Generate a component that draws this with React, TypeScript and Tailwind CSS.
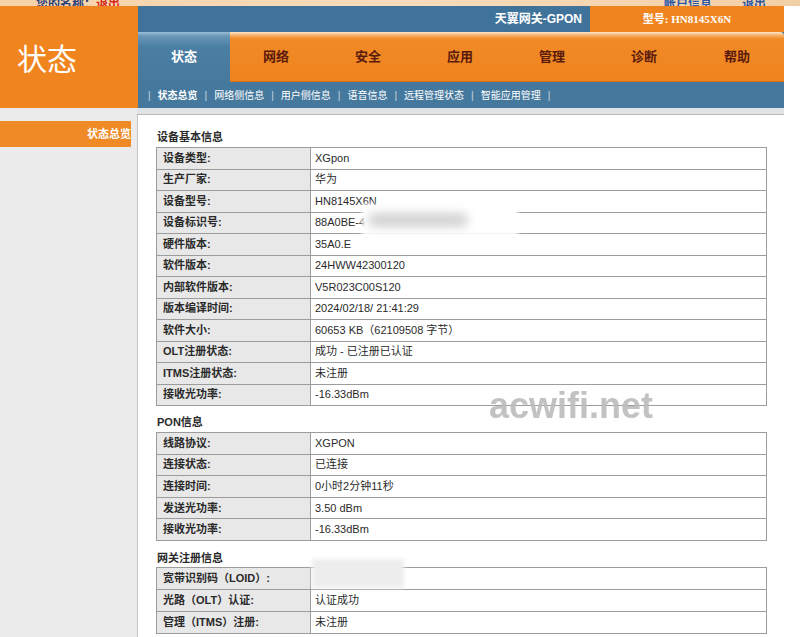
import React from "react";

const tabs = ["状态", "网络", "安全", "应用", "管理", "诊断", "帮助"];
const subs = ["状态总览", "网络侧信息", "用户侧信息", "语音信息", "远程管理状态", "智能应用管理"];

const t1: [string, string][] = [
  ["设备类型:", "XGpon"],
  ["生产厂家:", "华为"],
  ["设备型号:", "HN8145X6N"],
  ["设备标识号:", "88A0BE-4"],
  ["硬件版本:", "35A0.E"],
  ["软件版本:", "24HWW42300120"],
  ["内部软件版本:", "V5R023C00S120"],
  ["版本编译时间:", "2024/02/18/ 21:41:29"],
  ["软件大小:", "60653 KB（62109508 字节）"],
  ["OLT注册状态:", "成功 - 已注册已认证"],
  ["ITMS注册状态:", "未注册"],
  ["接收光功率:", "-16.33dBm"],
];
const t2: [string, string][] = [
  ["线路协议:", "XGPON"],
  ["连接状态:", "已连接"],
  ["连接时间:", "0小时2分钟11秒"],
  ["发送光功率:", "3.50 dBm"],
  ["接收光功率:", "-16.33dBm"],
];
const t3: [string, string][] = [
  ["宽带识别码（LOID）:", ""],
  ["光路（OLT）认证:", "认证成功"],
  ["管理（ITMS）注册:", "未注册"],
];

function InfoTable({ rows, h }: { rows: [string, string][]; h: string }) {
  return (
    <table className="w-[611px] border-collapse border border-[#9c9c9c] text-[11px] text-[#2a2a2a]">
      <tbody>
        {rows.map(([k, v]) => (
          <tr key={k} className={h}>
            <td className="w-[154px] border border-[#9c9c9c] bg-[#e8e8e8] pl-[6px] font-bold leading-none">{k}</td>
            <td className="border border-[#9c9c9c] bg-white pl-[4px] leading-none">{v}</td>
          </tr>
        ))}
      </tbody>
    </table>
  );
}

export default function App() {
  return (
    <div
      className="relative w-[800px] h-[637px] overflow-hidden bg-white"
      style={{ fontFamily: '"Liberation Sans", "Noto Sans CJK SC", sans-serif' }}
    >
      {/* top strip */}
      <div className="flex h-[6px] items-end overflow-hidden bg-gradient-to-r from-[#f6d2a8] via-[#f9dcbc] to-[#f3cfa6]">
        <div className="flex w-[800px] items-end text-[12px] font-bold leading-[12px] -mb-[4px]">
          <span className="ml-[36px] text-[#2c3f7a]">您的名称：</span>
          <span className="text-[#d42a1c]">退出</span>
          <span className="ml-auto text-[#2c58a8]">帐户信息</span>
          <span className="ml-[30px] mr-[34px] text-[#2c58a8]">退出</span>
        </div>
      </div>

      {/* header */}
      <div className="flex h-[102px]">
        <div className="flex w-[138px] items-center bg-[#f0851f] pl-[17px]">
          <span className="text-[30px] font-normal leading-none text-white" style={{ fontFamily: '"Noto Sans CJK SC", sans-serif' }}>
            状态
          </span>
        </div>
        <div className="flex w-[646px] flex-col">
          <div className="flex h-[26px]">
            <div className="flex flex-1 items-center justify-end bg-[#3f7399] pr-[8px] text-[12px] font-bold text-white">
              天翼网关-GPON
            </div>
            <div
              className="flex w-[194px] items-center justify-center bg-[#f0851f] text-[11px] font-bold text-white"
              style={{ fontFamily: '"Liberation Serif", "Noto Sans CJK SC", serif' }}
            >
              型号: HN8145X6N
            </div>
          </div>
          <div className="flex h-[50px] bg-[#3f7399]">
            {tabs.map((t, i) => (
              <div
                key={t}
                className={
                  i === 0
                    ? "flex w-[92px] items-center justify-center bg-[linear-gradient(to_bottom,#9cbfd6_0%,#6a98b8_8%,#4a7ea3_30%,#45799e_100%)] text-[13px] font-bold text-white"
                    : i === 6
                    ? "flex w-[94px] items-center justify-center rounded-tr-[4px] border-b border-[#d9701a] bg-[linear-gradient(to_bottom,#fce6cc_0%,#f6b672_6%,#f08a26_14%,#ef841e_100%)] text-[13px] font-bold text-[#5a1a0c]"
                    : "flex w-[92px] items-center justify-center border-b border-[#d9701a] bg-[linear-gradient(to_bottom,#fce6cc_0%,#f6b672_6%,#f08a26_14%,#ef841e_100%)] text-[13px] font-bold text-[#5a1a0c]"
                }
              >
                {t}
              </div>
            ))}
          </div>
          <div className="flex h-[26px] items-center gap-[7px] bg-[#45789d] pl-[10px] text-[10px] text-white">
            <span className="text-[#c9d8e4]">|</span>
            {subs.map((s, i) => (
              <React.Fragment key={s}>
                <span className={i === 0 ? "font-bold" : ""}>{s}</span>
                <span className="text-[#c9d8e4]">|</span>
              </React.Fragment>
            ))}
          </div>
        </div>
      </div>

      {/* body */}
      <div className="flex h-[529px]">
        <div className="w-[137px] bg-[#ebebeb] pt-[13px]">
          <div className="flex h-[26px] w-[131px] items-center justify-end bg-[#ef8a27] text-[11px] font-bold text-white">
            状态总览
          </div>
        </div>
        <div className="flex w-[647px] flex-col">
          <div className="h-[7px] border-b border-[#b8b8b8] bg-[#e1e4e7]" />
          <div className="flex-1 border-l border-[#c4c4c4] bg-white pl-[18px] pt-[14px]">
            <div className="mb-[2px] pl-[1px] text-[11px] font-bold leading-[16px] text-[#2a2a2a]">设备基本信息</div>
            <InfoTable rows={t1} h="h-[21.5px]" />
            <div className="mb-[2px] mt-[8px] pl-[1px] text-[11px] font-bold leading-[16px] text-[#2a2a2a]">PON信息</div>
            <InfoTable rows={t2} h="h-[21.6px]" />
            <div className="mb-[1px] mt-[9px] pl-[1px] text-[11px] font-bold leading-[16px] text-[#2a2a2a]">网关注册信息</div>
            <InfoTable rows={t3} h="h-[22px]" />
          </div>
        </div>
        <div className="flex-1 bg-white" />
      </div>

      {/* watermark */}
      <div className="pointer-events-none absolute left-[489px] top-[388px] text-[36px] font-bold leading-none text-[#bcbcbc] opacity-90" style={{ fontFamily: '"Liberation Sans", sans-serif' }}>
        acwifi.net
      </div>

      {/* blurred regions */}
      <div className="absolute left-[362px] top-[204px] h-[32px] w-[156px] bg-white blur-[2px]">
        <div className="ml-[6px] mt-[9px] h-[14px] w-[100px] rounded-full bg-[#d2d2d2] blur-[4px]" />
      </div>
      <div className="absolute left-[312px] top-[559px] h-[29px] w-[92px] bg-[#ededed] blur-[2px]" />
    </div>
  );
}
